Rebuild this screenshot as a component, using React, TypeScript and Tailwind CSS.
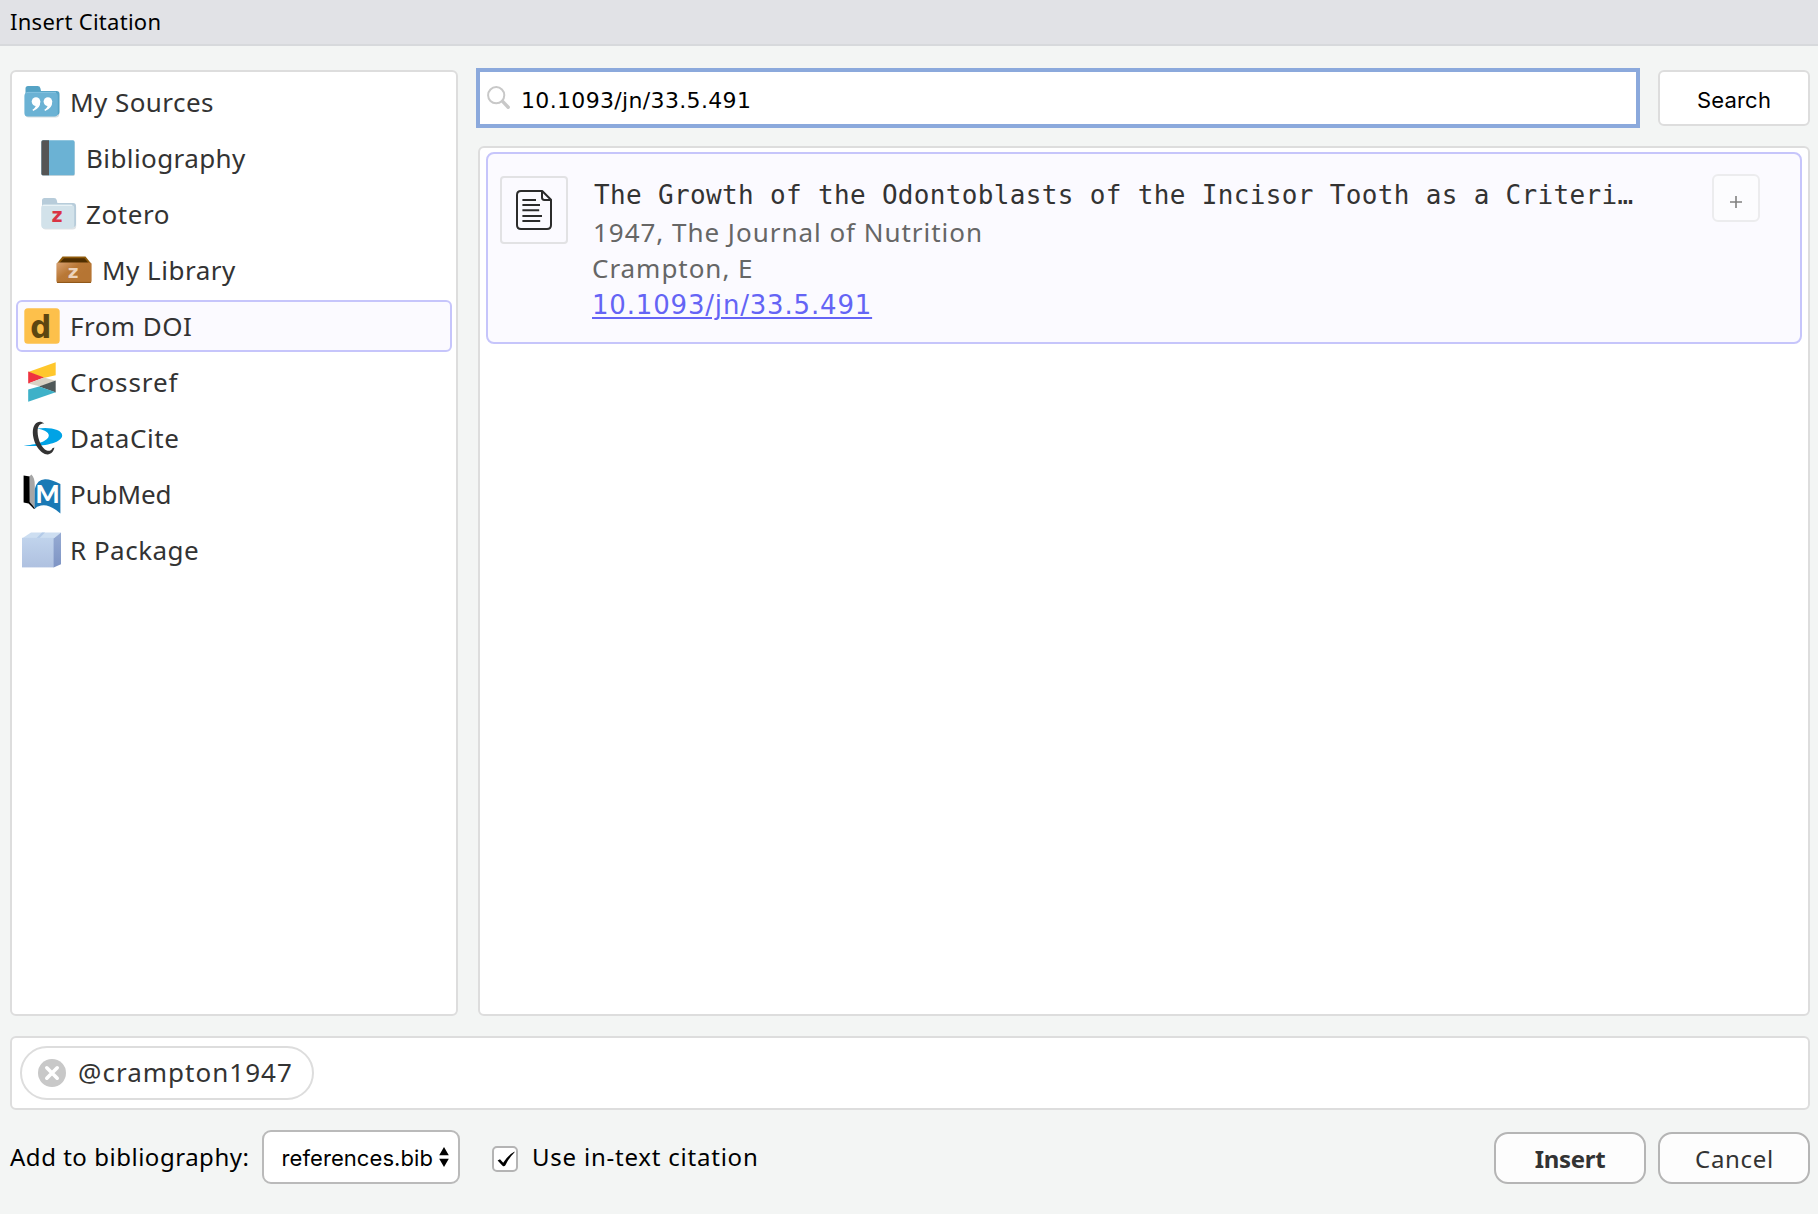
import type { ReactNode } from 'react';

function SourcesIcon() {
  return (
    <svg width="36" height="34" viewBox="0 0 36 34">
      <rect x="1.2" y="7" width="34" height="25.6" rx="3.5" fill="#d5dde1" />
      <path d="M1.5 14V3.6Q1.5 1 4 1H13.5Q16 1 16.4 3.2L17 6H32.5Q35.5 6 35.5 9V27Q35.5 30 32.5 30H20Z" fill="#55a3c5" />
      <rect x="0.4" y="7.6" width="33.4" height="23.8" rx="3.5" fill="#6bb2d4" />
      <path d="M1.8 8.4Q2.5 7.4 4 7.4H32" stroke="#86c3e0" strokeWidth="1" fill="none" />
      <g fill="#fff">
        <circle cx="12" cy="16.6" r="4.3" />
        <path d="M16.3 16.6Q16.5 23.4 9.2 26L8.4 24.8Q11.8 22.8 11.8 20Z" />
        <circle cx="23.9" cy="16.6" r="4.3" />
        <path d="M28.2 16.6Q28.4 23.4 21.1 26L20.3 24.8Q23.7 22.8 23.7 20Z" />
      </g>
    </svg>
  );
}

function BookIcon() {
  return (
    <svg width="34" height="36" viewBox="0 0 34 36">
      <rect x="0.8" y="1" width="33" height="35" rx="1.6" fill="#d9dcde" />
      <rect x="0.4" y="0.3" width="33.2" height="35" rx="1.6" fill="#6bb2d4" />
      <path d="M8 0.3V35.3H2Q0.4 35.3 0.4 33.7V1.9Q0.4 0.3 2 0.3Z" fill="#555" />
    </svg>
  );
}

function ZoteroIcon() {
  return (
    <svg width="36" height="34" viewBox="0 0 36 34">
      <rect x="1.2" y="7" width="34" height="25.6" rx="3.5" fill="#dfe3e6" />
      <path d="M1 14V3.6Q1 1 3.5 1H13Q15.4 1 15.8 3.2L16.4 6H32Q35 6 35 9V27Q35 30 32 30H20Z" fill="#b7ccda" />
      <rect x="0.2" y="7.6" width="33" height="23.8" rx="3.5" fill="#d2e2ea" />
      <path d="M1.6 8.4H31" stroke="#e9f2f6" strokeWidth="1.2" fill="none" />
      <text x="16.4" y="25.4" textAnchor="middle" fontFamily="DejaVu Sans" fontWeight="700" fontSize="19" fill="#d93444">z</text>
    </svg>
  );
}

function LibraryIcon() {
  return (
    <svg width="36" height="28" viewBox="0 0 36 28">
      <defs>
        <linearGradient id="box" x1="0" y1="0" x2="0.7" y2="0.6">
          <stop offset="0" stopColor="#d9a273" />
          <stop offset="0.6" stopColor="#b97836" />
          <stop offset="1" stopColor="#b67533" />
        </linearGradient>
      </defs>
      <path d="M6.5 0.5H29.5L35.5 8H0.5Z" fill="#8f5a0a" />
      <path d="M8 2.2H28.5L32.5 7H3.5Z" fill="#4f2e00" />
      <rect x="0.4" y="6.4" width="35.2" height="20.6" rx="2" fill="url(#box)" />
      <path d="M1 26.4H35" stroke="#8d5517" strokeWidth="1" />
      <text x="17.4" y="21.8" textAnchor="middle" fontFamily="DejaVu Sans" fontWeight="700" fontSize="18.5" fill="#ecd3bc">z</text>
    </svg>
  );
}

function DoiIcon() {
  return (
    <svg className="overflow-visible" width="36" height="36" viewBox="0 0 36 36">
      <rect x="0.3" y="0.3" width="35.4" height="35.4" rx="3.5" fill="#fdc04b" />
      <text x="6.2" y="30" fontFamily="DejaVu Sans" fontWeight="700" fontSize="32" textLength="21.5" lengthAdjust="spacingAndGlyphs" fill="#5c4611">d</text>
    </svg>
  );
}

function CrossrefIcon() {
  return (
    <svg width="28" height="40" viewBox="0 0 28 40">
      <path d="M27.7 0.3V13.2L15.6 16L0.2 10Z" fill="#ffc72c" />
      <path d="M0.2 9.6L16 15.6L0.2 21.5Z" fill="#ef3340" />
      <path d="M16 15.6L27.7 18.8L12.5 24.6L0.2 21.5Z" fill="#d8d2c4" />
      <path d="M27.7 18.4V30.5L11 24.6Z" fill="#4f5858" />
      <path d="M0.2 27.6L11 24.4L27.7 30.2L0.2 39.8Z" fill="#3eb1c8" />
    </svg>
  );
}

function DataCiteIcon() {
  return (
    <svg width="40" height="34" viewBox="0 0 40 34">
      <path d="M14.2 7.6C26 5.4 39.4 8.4 39.2 14.4C39 21.6 21 26 0.6 24.8C12 24 25.6 20.6 25.8 14.6C25.9 10.8 20 8.6 14.2 7.6Z" fill="#00a3e6" />
      <path d="M21.2 2.4C16 -2 9.6 2.2 9.8 11.6C10 22.6 17.6 33.6 24.6 33.5C28 33.4 30.6 30.6 31.4 26.6L29.4 27.2C28.2 29.6 26 30.4 23.8 29.4C18.8 27.2 14.6 18.6 14.6 10.4C14.6 4.4 17.2 2.2 21.2 2.4Z" fill="#333" />
    </svg>
  );
}

function PubMedIcon() {
  return (
    <svg width="38" height="40" viewBox="0 0 38 40">
      <path d="M0.6 1.6L7 2.4V26L12 34.4L11 35L5.6 29.6L0.6 28.6Z" fill="#000" />
      <path d="M6.4 2.6L8.4 0.6Q12 4 11.8 12V34L6.6 28Z" fill="#a6a6a6" />
      <path d="M11.8 15Q14 5.4 22 5.2Q28 5 37.4 10V39.4Q26 29.6 18 31.6Q13.6 32.6 11.6 35Z" fill="#1a79b5" />
      <text x="12.6" y="29.4" fontFamily="Lato" fontWeight="900" fontSize="24" textLength="24" lengthAdjust="spacingAndGlyphs" fill="#fff">M</text>
    </svg>
  );
}

function PackageIcon() {
  return (
    <svg width="40" height="36" viewBox="0 0 40 36">
      <defs>
        <linearGradient id="front" x1="0" y1="0" x2="0" y2="1">
          <stop offset="0" stopColor="#c0d3ec" />
          <stop offset="1" stopColor="#afc1e0" />
        </linearGradient>
        <linearGradient id="side" x1="0" y1="0" x2="0" y2="1">
          <stop offset="0" stopColor="#96abd3" />
          <stop offset="1" stopColor="#7e94c4" />
        </linearGradient>
      </defs>
      <path d="M0 6.4L9 0.4H39L31.6 6.4Z" fill="#cddef1" />
      <path d="M14.6 6L20 0.6H23L17.6 6Z" fill="#b4cbe8" />
      <rect x="0" y="5.8" width="32" height="29.6" fill="url(#front)" />
      <path d="M31.6 6.4L39 0.4V32.2L31.6 35.4Z" fill="url(#side)" />
    </svg>
  );
}

function SearchIcon() {
  return (
    <svg width="24" height="24" viewBox="0 0 24 24" fill="none" stroke="#c8c8c8">
      <circle cx="9.2" cy="9.2" r="8.1" strokeWidth="2" />
      <path d="M15.6 15.4L21.2 21.2" strokeWidth="3.4" strokeLinecap="round" />
    </svg>
  );
}

function DocumentIcon() {
  return (
    <svg width="36" height="40" viewBox="0 0 36 40" fill="none" stroke="#2b2b2b" strokeWidth="2">
      <path d="M26.2 1H5Q1 1 1 5V35Q1 39 5 39H31Q35 39 35 35V9.8Z" strokeLinejoin="round" />
      <path d="M26 1.2V7.6Q26 10 28.4 10H34.6" />
      <path d="M6.4 10H20M6.4 15H24M6.4 20.2H23.2M6.4 26H26M6.4 31H24.2" />
    </svg>
  );
}

function SourceRow({ icon, label, className, selected }: { icon: ReactNode; label: string; className: string; selected?: boolean }) {
  return (
    <div
      className={`flex h-[52px] items-center rounded-md border-2 text-[26px] text-[#333] ${
        selected ? 'border-[#c6c5fb] bg-[#fbfaff]' : 'border-transparent'
      } ${className}`}
    >
      {icon}
      <span>{label}</span>
    </div>
  );
}

export default function App() {
  return (
    <div className="flex h-[1214px] w-[1818px] flex-col bg-[#f3f5f4] font-['Noto_Sans',sans-serif] whitespace-nowrap text-black">
      <header className="flex h-[46px] shrink-0 items-center border-b-2 border-[#d7d9dc] bg-[#e1e2e6] pb-[2px] pl-[10px] text-[22px] tracking-[0.28px]">
        Insert Citation
      </header>

      <main className="flex h-[970px] shrink-0 pr-2 pl-[10px]">
        <nav className="mt-6 flex w-[448px] flex-col gap-1 rounded-md border-2 border-[#ddd] bg-white p-1">
          <SourceRow className="gap-[10px] pl-[6px] tracking-[0.44px]" icon={<SourcesIcon />} label="My Sources" />
          <SourceRow className="gap-[11px] pl-[23px] tracking-[0.4px]" icon={<BookIcon />} label="Bibliography" />
          <SourceRow className="gap-[9px] pl-[23px] tracking-[0.6px]" icon={<ZoteroIcon />} label="Zotero" />
          <SourceRow className="gap-[10px] pl-[38px] tracking-[0.5px]" icon={<LibraryIcon />} label="My Library" />
          <SourceRow className="gap-[10px] pl-[6px] tracking-[0.46px]" icon={<DoiIcon />} label="From DOI" selected />
          <SourceRow className="gap-[14px] pl-[10px] tracking-[0.9px]" icon={<CrossrefIcon />} label="Crossref" />
          <SourceRow className="gap-[7px] pl-[5px] tracking-[0.6px]" icon={<DataCiteIcon />} label="DataCite" />
          <SourceRow className="gap-[9px] pl-[5px] tracking-[-0.1px]" icon={<PubMedIcon />} label="PubMed" />
          <SourceRow className="gap-[8px] pl-[4px] tracking-[0.48px]" icon={<PackageIcon />} label="R Package" />
        </nav>

        <section className="mt-[22px] ml-[18px] flex flex-1 flex-col">
          <div className="flex items-center gap-[18px]">
            <div className="flex h-[60px] w-[1164px] items-center border-4 border-[#8ba9dc] bg-white pl-[7px]">
              <SearchIcon />
              <span className="ml-[10px] pt-1 font-['DejaVu_Sans',sans-serif] text-[22px] tracking-[0.34px]">10.1093/jn/33.5.491</span>
            </div>
            <button className="h-14 w-[152px] rounded-md border-2 border-[#ddd] bg-white pt-[5px] font-['Inter',sans-serif] text-[22px] tracking-[0.2px]">
              Search
            </button>
          </div>

          <div className="mt-[18px] ml-[2px] flex-1 rounded-md border-2 border-[#ddd] bg-white px-[6px] pt-1">
            <article className="flex h-48 rounded-lg border-2 border-[#c6c5fb] bg-[#fbfaff] pl-3">
              <div className="mt-[22px] flex h-[68px] w-[68px] items-center justify-center rounded border-2 border-[#e2e2e4]">
                <DocumentIcon />
              </div>
              <div className="mt-[22px] ml-6 w-[1120px] text-[26px] leading-9 text-[#666]">
                <h2 className="pl-[2px] font-['DejaVu_Sans_Mono',monospace] leading-[38px] tracking-[0.34px] text-[#333]">
                  The Growth of the Odontoblasts of the Incisor Tooth as a Criteri…
                </h2>
                <p className="pl-[1px] tracking-[0.97px]">1947, The Journal of Nutrition</p>
                <p className="tracking-[0.96px]">Crampton, E</p>
                <a className="block pt-[1px] font-['DejaVu_Sans',sans-serif] tracking-[0.82px] text-[#6464f5] underline decoration-2 underline-offset-[3px]">
                  10.1093/jn/33.5.491
                </a>
              </div>
              <button className="mt-5 flex h-12 w-12 items-center justify-center rounded-md border-2 border-[#ececee] bg-[#fcfcfe] pt-[7px]">
                <svg width="12" height="12" viewBox="0 0 12 12" stroke="#808080" strokeWidth="1.6">
                  <path d="M6 0V12M0 6H12" />
                </svg>
              </button>
            </article>
          </div>
        </section>
      </main>

      <div className="mt-5 mr-2 ml-[10px] flex h-[74px] shrink-0 items-start rounded-md border-2 border-[#ddd] bg-white p-2">
        <div className="flex h-[54px] w-[294px] items-center rounded-full border-2 border-[#ddd] pl-4 text-[26px] tracking-[1.02px] text-[#333]">
          <svg width="28" height="28" viewBox="0 0 28 28">
            <circle cx="14" cy="14" r="14" fill="#c8c8c8" />
            <path d="M8.8 8.8L19.2 19.2M19.2 8.8L8.8 19.2" stroke="#fff" strokeWidth="3.6" strokeLinecap="round" />
          </svg>
          <span className="ml-3 pb-[2px]">@crampton1947</span>
        </div>
      </div>

      <footer className="mt-5 flex h-[54px] items-center pr-2 pl-[10px] text-[24px]">
        <span className="w-[252px] tracking-[0.52px]">Add to bibliography:</span>
        <div className="flex h-[54px] w-[198px] items-center rounded-[9px] border-2 border-[#bababa] bg-white pl-[17.5px]">
          <span className="pt-[2px] font-['Inter',sans-serif] text-[22px] tracking-[0.08px]">references.bib</span>
          <svg className="ml-[6px]" width="10" height="20" viewBox="0 0 10 20">
            <path d="M5 0L9.8 8.2H0.2ZM5 20L9.8 11.8H0.2Z" />
          </svg>
        </div>
        <div className="mt-1 ml-8 flex h-[26px] w-[26px] items-center justify-center rounded-[5px] border-2 border-[#b4b4b4] bg-white">
          <svg className="ml-[2px]" width="18" height="16" viewBox="0 0 18 16">
            <path d="M0.6 9.4L3 8.2L6.2 11.8Q10.6 4.6 17.6 0.6L17.4 1.6Q12 6.8 8.4 14.2Q7.4 15.6 5.8 15Z" />
          </svg>
        </div>
        <span className="ml-[14px] flex-1 tracking-[0.78px]">Use in-text citation</span>
        <button className="mt-[2px] h-[52px] w-[152px] rounded-[14px] border-2 border-[#b5b5b5] bg-[#fdfdfd] pt-[2px] font-bold tracking-[-0.3px] text-[#333]">
          Insert
        </button>
        <button className="mt-[2px] ml-3 h-[52px] w-[152px] rounded-[14px] border-2 border-[#b5b5b5] bg-[#fdfdfd] pt-[2px] pl-[1px] tracking-[0.7px] text-[#333]">
          Cancel
        </button>
      </footer>
    </div>
  );
}
